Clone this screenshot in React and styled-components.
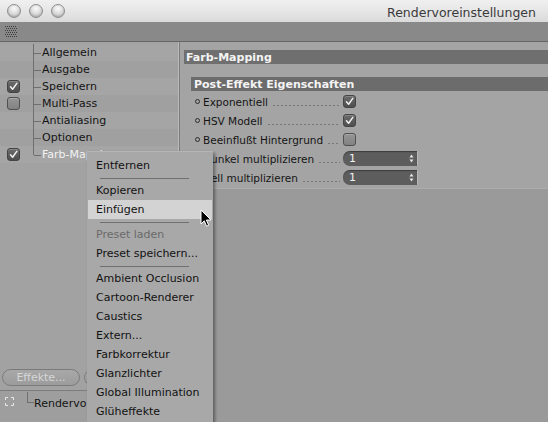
import styled, { createGlobalStyle } from 'styled-components'

const GlobalStyle = createGlobalStyle`
  html, body {
    margin: 0;
    padding: 0;
    background: #999;
  }
  * {
    box-sizing: border-box;
  }
`

const treeItems = [
  { label: 'Allgemein', check: null },
  { label: 'Ausgabe', check: null },
  { label: 'Speichern', check: true },
  { label: 'Multi-Pass', check: false },
  { label: 'Antialiasing', check: null },
  { label: 'Optionen', check: null },
  { label: 'Farb-Mapping', check: true, selected: true },
]

const props = [
  { label: 'Exponentiell', type: 'check', value: true },
  { label: 'HSV Modell', type: 'check', value: true },
  { label: 'Beeinflußt Hintergrund', type: 'check', value: false },
  { label: 'Dunkel multiplizieren', type: 'number', value: '1' },
  { label: 'Hell multiplizieren', type: 'number', value: '1' },
]

const menuItems = [
  { label: 'Entfernen' },
  { sep: true },
  { label: 'Kopieren' },
  { label: 'Einfügen', active: true },
  { sep: true },
  { label: 'Preset laden', disabled: true },
  { label: 'Preset speichern...' },
  { sep: true },
  { label: 'Ambient Occlusion' },
  { label: 'Cartoon-Renderer' },
  { label: 'Caustics' },
  { label: 'Extern...' },
  { label: 'Farbkorrektur' },
  { label: 'Glanzlichter' },
  { label: 'Global Illumination' },
  { label: 'Glüheffekte' },
]

const CheckMark = () => (
  <svg width="9" height="9" viewBox="0 0 9 9">
    <path
      d="M1.5 4.8 L3.6 7.2 L7.8 1.4"
      fill="none"
      stroke="#f0f0f0"
      strokeWidth="1.5"
      strokeLinecap="round"
      strokeLinejoin="round"
    />
  </svg>
)

const Checkbox = ({ checked }) => (
  <Box $checked={checked}>{checked && <CheckMark />}</Box>
)

const Grip = () => (
  <svg width="12" height="12" viewBox="0 0 12 12">
    {Array.from({ length: 36 }).map((_, i) => {
      const x = i % 6
      const y = Math.floor(i / 6)
      return (
        <rect
          key={i}
          x={x * 2 + (y % 2)}
          y={y * 2}
          width="1"
          height="1"
          fill="#3c3c3c"
        />
      )
    })}
  </svg>
)

const FrameIcon = () => (
  <svg width="9" height="9" viewBox="0 0 9 9">
    <path
      d="M0.5 3 V0.5 H3 M6 0.5 H8.5 V3 M8.5 6 V8.5 H6 M3 8.5 H0.5 V6"
      fill="none"
      stroke="#e8e8e8"
      strokeWidth="1"
    />
  </svg>
)

const Spin = () => (
  <svg width="5" height="9" viewBox="0 0 5 9">
    <path d="M2.5 0.5 L4.5 3.5 H0.5 Z" fill="#e6e6e6" />
    <path d="M2.5 8.5 L4.5 5.5 H0.5 Z" fill="#e6e6e6" />
  </svg>
)

const Cursor = () => (
  <CursorWrap>
    <svg width="13" height="19" viewBox="0 0 13 19">
      <path
        d="M1 1 L1 15 L4.3 11.8 L6.6 17.2 L8.7 16.3 L6.4 11 L11 11 Z"
        fill="#000"
        stroke="#fff"
        strokeWidth="1"
        strokeLinejoin="round"
      />
    </svg>
  </CursorWrap>
)

const App = () => {
  return (
    <>
      <GlobalStyle />
      <Window>
        <TitleBar>
          <Lights>
            <Light />
            <Light />
            <Light />
          </Lights>
          <Title>Rendervoreinstellungen</Title>
        </TitleBar>
        <Toolbar>
          <Grip />
        </Toolbar>
        <Main>
          <LeftPanel>
            <Tree>
              {treeItems.map((item, i) => (
                <TreeRow key={item.label} $odd={i % 2 === 1}>
                  <CheckCell>
                    {item.check !== null && <Checkbox checked={item.check} />}
                  </CheckCell>
                  <Branch $last={i === treeItems.length - 1} />
                  <TreeLabel $selected={item.selected}>{item.label}</TreeLabel>
                </TreeRow>
              ))}
            </Tree>
            <ButtonBar>
              <PillButton>Effekte...</PillButton>
              <PillButton />
            </ButtonBar>
            <BottomRow>
              <FrameIcon />
              <BottomBranch />
              <TreeLabel>Rendervo</TreeLabel>
            </BottomRow>
          </LeftPanel>
          <RightPanel>
            <Upper>
              <SectionHeader>Farb-Mapping</SectionHeader>
              <Group>
                <GroupHeader>Post-Effekt Eigenschaften</GroupHeader>
                {props.map((p) => (
                  <PropRow key={p.label}>
                    <PropName>
                      <Bullet />
                      <PropLabel>{p.label}</PropLabel>
                      <Leader />
                    </PropName>
                    {p.type === 'check' ? (
                      <Checkbox checked={p.value} />
                    ) : (
                      <NumberField>
                        <span>{p.value}</span>
                        <Spin />
                      </NumberField>
                    )}
                  </PropRow>
                ))}
              </Group>
            </Upper>
          </RightPanel>
        </Main>
        <Menu>
          {menuItems.map((m, i) =>
            m.sep ? (
              <Separator key={i} />
            ) : (
              <MenuItem key={i} $active={m.active} $disabled={m.disabled}>
                {m.label}
              </MenuItem>
            )
          )}
        </Menu>
        <Cursor />
      </Window>
    </>
  )
}

const Window = styled.div`
  position: relative;
  width: 548px;
  height: 422px;
  display: flex;
  flex-direction: column;
  overflow: hidden;
  background: #999;
  font-family: 'DejaVu Sans', 'Noto Sans', sans-serif;
  font-size: 11px;
  color: #111;
`

const TitleBar = styled.div`
  height: 22px;
  flex-shrink: 0;
  display: flex;
  align-items: center;
  justify-content: space-between;
  padding: 0 12px 0 7px;
  background: linear-gradient(#f0f0f0, #e6e6e6 50%, #dadada);
`

const Lights = styled.div`
  display: flex;
  gap: 8px;
`

const Light = styled.div`
  width: 14px;
  height: 14px;
  border-radius: 50%;
  border: 1px solid #8e8e8e;
  background: radial-gradient(circle at 50% 30%, #fbfbfb 0%, #d8d8d8 55%, #b4b4b4 100%);
  box-shadow: inset 0 -1px 2px rgba(0, 0, 0, 0.15);
`

const Title = styled.div`
  font-size: 12.5px;
  color: #3a3a3a;
  padding-top: 2px;
`

const Toolbar = styled.div`
  height: 20px;
  flex-shrink: 0;
  display: flex;
  align-items: center;
  padding-left: 5px;
  background: #898989;
  border-bottom: 1px solid #666;
`

const Main = styled.div`
  flex: 1;
  display: flex;
  min-height: 0;
`

const LeftPanel = styled.div`
  width: 179px;
  flex-shrink: 0;
  display: flex;
  flex-direction: column;
  background: #a2a2a2;
  border-right: 1px solid #b9b9b9;
`

const Tree = styled.div`
  flex: 1;
  padding-top: 2px;
`

const TreeRow = styled.div`
  height: 17px;
  display: flex;
  align-items: center;
  background: ${(p) => (p.$odd ? '#a0a0a0' : '#a5a5a5')};
`

const CheckCell = styled.div`
  width: 33px;
  height: 100%;
  display: flex;
  align-items: center;
  padding-left: 7px;
`

const Branch = styled.div`
  position: relative;
  width: 9px;
  height: 100%;
  border-left: 1px solid #6f6f6f;
  ${(p) => p.$last && 'height: 50%; align-self: flex-start;'}

  &::after {
    content: '';
    position: absolute;
    left: 0;
    top: ${(p) => (p.$last ? '100%' : '50%')};
    width: 7px;
    border-top: 1px solid #6f6f6f;
  }
`

const TreeLabel = styled.span`
  color: ${(p) => (p.$selected ? '#f2f2f2' : '#141414')};
  white-space: nowrap;
  line-height: 1;
`

const ButtonBar = styled.div`
  height: 26px;
  display: flex;
  align-items: center;
  gap: 4px;
  padding-left: 2px;
  border-bottom: 1px solid #7d7d7d;
  overflow: hidden;
`

const PillButton = styled.div`
  flex-shrink: 0;
  width: 78px;
  height: 17px;
  border-radius: 9px;
  border: 1px solid #7a7a7a;
  background: linear-gradient(#a8a8a8, #9c9c9c);
  color: #d6d6d6;
  display: flex;
  align-items: center;
  justify-content: center;
  font-size: 11px;
`

const BottomRow = styled.div`
  height: 31px;
  display: flex;
  align-items: flex-start;
  padding: 6px 0 0 5px;
  background: #9e9e9e;
  overflow: hidden;

  ${TreeLabel} {
    margin-top: 1px;
  }
`

const BottomBranch = styled.div`
  width: 7px;
  height: 11px;
  margin: -5px 0 0 13px;
  border-left: 1px solid #6f6f6f;
  border-bottom: 1px solid #6f6f6f;
`

const RightPanel = styled.div`
  flex: 1;
  border-left: 1px solid #7c7c7c;
  background: #9a9a9a;
`

const Upper = styled.div`
  background: #a4a4a4;
  padding: 8px 0 1px 4px;
  border-bottom: 1px solid #acacac;
`

const SectionHeader = styled.div`
  height: 14px;
  display: flex;
  align-items: center;
  padding-left: 2px;
  background: #6f6f6f;
  color: #f4f4f4;
  font-weight: bold;
  font-size: 11px;
`

const Group = styled.div`
  margin-top: 13px;
  padding-left: 7px;
`

const GroupHeader = styled.div`
  height: 14px;
  display: flex;
  align-items: center;
  padding-left: 3px;
  margin-bottom: 1px;
  background: #6c6c6c;
  color: #f4f4f4;
  font-weight: bold;
  font-size: 11px;
`

const PropRow = styled.div`
  height: 19px;
  display: flex;
  align-items: center;
  padding-left: 4px;
`

const PropName = styled.div`
  width: 148px;
  flex-shrink: 0;
  display: flex;
  align-items: center;
  overflow: hidden;
`

const Bullet = styled.div`
  width: 5px;
  height: 5px;
  border-radius: 50%;
  border: 1px solid #2c2c2c;
  margin-right: 3px;
  flex-shrink: 0;
`

const PropLabel = styled.span`
  white-space: nowrap;
  color: #151515;
  font-size: 10.5px;
`

const Leader = styled.div`
  flex: 1;
  min-width: 0;
  height: 1px;
  margin: 7px 3px 0 4px;
  background-image: radial-gradient(circle, #777 0.6px, transparent 0.8px);
  background-size: 4px 1px;
`

const Box = styled.div`
  width: 13px;
  height: 13px;
  border-radius: 3px;
  flex-shrink: 0;
  display: flex;
  align-items: center;
  justify-content: center;
  border: 1px solid ${(p) => (p.$checked ? '#444' : '#505050')};
  background: ${(p) =>
    p.$checked
      ? 'linear-gradient(#6c6c6c, #4e4e4e)'
      : 'linear-gradient(#959595, #828282)'};
  box-shadow: inset 0 1px 0 rgba(255, 255, 255, 0.18);
`

const NumberField = styled.div`
  width: 75px;
  height: 15px;
  flex-shrink: 0;
  display: flex;
  align-items: center;
  justify-content: space-between;
  padding: 0 3px 0 6px;
  border-radius: 7px 1px 1px 7px;
  background: #5d5d5d;
  border-right: 1px solid #b8b8b8;
  box-shadow: inset 0 1px 1px rgba(0, 0, 0, 0.35);
  color: #f2f2f2;
  font-size: 11px;
`

const Menu = styled.div`
  position: absolute;
  left: 87px;
  top: 151px;
  width: 126px;
  height: 290px;
  padding-top: 4px;
  background: #a8a8a8;
  border-top: 1px solid #b6b6b6;
  box-shadow: 2px 2px 3px rgba(0, 0, 0, 0.4);
`

const MenuItem = styled.div`
  height: 19px;
  display: flex;
  align-items: center;
  padding-left: 8px;
  margin: 0 1px;
  white-space: nowrap;
  color: ${(p) => (p.$disabled ? '#6a6a6a' : '#121212')};
  background: ${(p) => (p.$active ? '#d3d3d3' : 'transparent')};
`

const Separator = styled.div`
  height: 6px;
  display: flex;
  align-items: center;
  padding: 0 24px 0 13px;

  &::before {
    content: '';
    flex: 1;
    border-top: 1px solid #707070;
  }
`

const CursorWrap = styled.div`
  position: absolute;
  left: 200px;
  top: 209px;
  line-height: 0;
`

export default App
